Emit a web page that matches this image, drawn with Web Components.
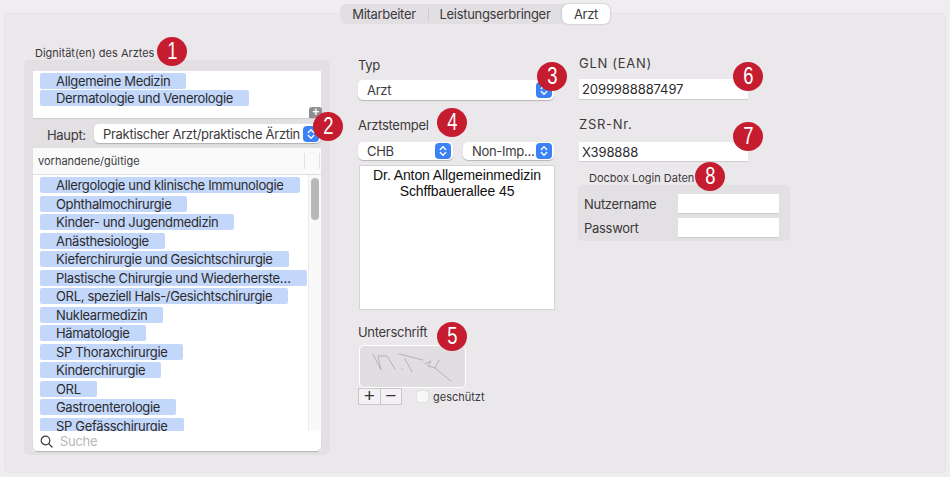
<!DOCTYPE html>
<html lang="de">
<head>
<meta charset="utf-8">
<title>Arzt</title>
<style>
  html, body { margin: 0; height: 100%; background: #f0edf0; overflow: hidden; }
  body { font: 13px Inter, "Noto Sans", sans-serif; letter-spacing: -.3px; color: #3b393b; }
</style>
</head>
<body>
<arzt-page></arzt-page>
<script>
class NumBadge extends HTMLElement {
  constructor () {
    super()
    this.shadow = this.attachShadow({ mode: 'open' })
  }
  connectedCallback () {
    this.shadow.innerHTML = `
    <style>
      :host {
        position: absolute;
        width: 30px;
        height: 29px;
        border-radius: 50%;
        background: #c61c30;
        display: flex;
        align-items: center;
        justify-content: center;
        z-index: 5;
      }
      span {
        color: #fff;
        font: 23px "Liberation Sans", sans-serif;
        letter-spacing: 0;
        transform: scaleX(.8);
      }
    </style>
    <span><slot></slot></span>`
  }
}

class SegTabs extends HTMLElement {
  constructor () {
    super()
    this.shadow = this.attachShadow({ mode: 'open' })
  }
  connectedCallback () {
    this.shadow.innerHTML = `
    <style>
      :host {
        display: flex;
        width: 270px;
        height: 20px;
        margin: 4px auto -11px;
        position: relative;
        z-index: 2;
        background: #e2dfe2;
        border-radius: 6px;
        box-sizing: border-box;
        align-items: center;
        font-size: 13px;
        color: #3b393b;
      }
      div { text-align: center; }
      .one { width: 88px; }
      .sep { width: 1px; height: 12px; background: #cfcccf; }
      .two { width: 132px; }
      .on {
        width: 48px;
        height: 20px;
        line-height: 20px;
        margin-left: 1px;
        background: #fff;
        border-radius: 6px;
        box-shadow: 0 0 2px rgba(0,0,0,.3);
      }
    </style>
    <div class="one">Mitarbeiter</div>
    <div class="sep"></div>
    <div class="two">Leistungserbringer</div>
    <div class="on">Arzt</div>`
  }
}

class PopSelect extends HTMLElement {
  constructor () {
    super()
    this.shadow = this.attachShadow({ mode: 'open' })
  }
  connectedCallback () {
    this.shadow.innerHTML = `
    <style>
      :host {
        display: flex;
        align-items: center;
        box-sizing: border-box;
        height: var(--h, 20px);
        padding: 0 2px 0 9px;
        background: #fff;
        border-radius: 5px;
        box-shadow: 0 1px 1px rgba(0,0,0,.22);
        color: #3b393b;
        font-size: 13px;
      }
      .text {
        flex: 1;
        min-width: 0;
        white-space: nowrap;
        overflow: hidden;
      }
      .step {
        width: 16px;
        height: 16px;
        border-radius: 4px;
        background: #3b82f6;
        flex: none;
      }
      svg { display: block; }
    </style>
    <div class="text"><slot></slot></div>
    <div class="step">
      <svg width="16" height="16" viewBox="0 0 16 16" fill="none" stroke="#fff" stroke-width="1.4" stroke-linecap="round" stroke-linejoin="round">
        <path d="M5.3 6.4 8 3.8l2.7 2.6M5.3 9.6 8 12.2l2.7-2.6"/>
      </svg>
    </div>`
  }
}

class TextBox extends HTMLElement {
  constructor () {
    super()
    this.shadow = this.attachShadow({ mode: 'open' })
  }
  connectedCallback () {
    this.shadow.innerHTML = `
    <style>
      :host {
        display: block;
        box-sizing: border-box;
        background: #fff;
        box-shadow: 0 1px 0 #cfccd0;
        padding: 0 3px;
        font-size: 13px;
        color: #2c2b2c;
        letter-spacing: -.1px;
      }
    </style>
    <slot></slot>`
  }
}

class ListPill extends HTMLElement {
  constructor () {
    super()
    this.shadow = this.attachShadow({ mode: 'open' })
  }
  connectedCallback () {
    this.shadow.innerHTML = `
    <style>
      :host {
        display: block;
        width: fit-content;
        height: 16px;
        line-height: 16px;
        padding: 0 16px;
        border-radius: 2px;
        background: #c3d7fa;
        color: #2c2b2c;
        font-size: 13px;
        letter-spacing: -.33px;
        white-space: nowrap;
      }
    </style>
    <slot></slot>`
  }
}

class SignatureBox extends HTMLElement {
  constructor () {
    super()
    this.shadow = this.attachShadow({ mode: 'open' })
  }
  connectedCallback () {
    this.shadow.innerHTML = `
    <style>
      :host {
        display: block;
        box-sizing: border-box;
        width: 107px;
        height: 43px;
        background: #e0dee0;
        border: 1.5px solid #fff;
        border-radius: 5px;
        overflow: hidden;
      }
      svg { display: block; margin: -1.5px; }
    </style>
    <svg width="107" height="43" viewBox="0 0 107 43" fill="none" stroke="#a9a7a9" stroke-width=".8" stroke-linejoin="round" stroke-linecap="round">
      <path d="M14 9l8 16-3-14h9l8 13"/>
      <path d="M43 24h.8"/>
      <path d="M40 9l24 6M46 14l7 13"/>
      <path d="M66 19l6-3-3 5 7 2 4-8M76 23l16 13"/>
    </svg>`
  }
}

class ArztPage extends HTMLElement {
  constructor () {
    super()
    this.shadow = this.attachShadow({ mode: 'open' })
    this.current = ['Allgemeine Medizin', 'Dermatologie und Venerologie']
    this.available = [
      'Allergologie und klinische Immunologie',
      'Ophthalmochirurgie',
      'Kinder- und Jugendmedizin',
      'Anästhesiologie',
      'Kieferchirurgie und Gesichtschirurgie',
      'Plastische Chirurgie und Wiederherste…',
      'ORL, speziell Hals-/Gesichtschirurgie',
      'Nuklearmedizin',
      'Hämatologie',
      'SP Thoraxchirurgie',
      'Kinderchirurgie',
      'ORL',
      'Gastroenterologie',
      'SP Gefässchirurgie'
    ]
    // left and top of the numbered markers, in page pixels
    this.badges = [[157, 37], [313, 112], [537, 62], [437, 108], [437, 322], [733, 62], [733, 122], [695, 162]]
  }
  connectedCallback () {
    this.render()
  }
  render () {
    const pills = (list) => list.map(item => `<list-pill>${item}</list-pill>`).join('')
    const badges = this.badges.map((b, i) => `<num-badge style="left:${b[0] - 5}px;top:${b[1] - 14}px">${i + 1}</num-badge>`).join('')
    this.shadow.innerHTML = `
    <style>
      :host { display: block; }
      .panel {
        position: relative;
        box-sizing: border-box;
        height: 460px;
        margin: 0 4px;
        padding: 33px 0 0 19px;
        background: #ebe8eb;
        border: 1px solid #e6e3e6;
        border-radius: 5px;
        display: flex;
        align-items: flex-start;
      }
      section { flex: none; }
      .small { font-size: 11px; letter-spacing: 0; }
      .group {
        box-sizing: border-box;
        background: #e3e0e3;
        border-radius: 5px;
      }
      .dign { width: 306px; margin-top: -1px; }
      .dign > .small { height: 14px; line-height: 14px; padding-left: 11px; }
      .dign .group { height: 395px; padding: 11px 9px 4px; display: flex; flex-direction: column; }
      .chosen {
        position: relative;
        height: 47px;
        background: #fff;
        box-shadow: 0 1px 0 #cfccd0;
        padding: 2px 7px;
        box-sizing: border-box;
        display: flex;
        flex-direction: column;
        gap: 1px;
      }
      .add {
        position: absolute;
        right: -1px;
        bottom: 0;
        width: 13px;
        height: 11px;
        border-radius: 3px 3px 0 0;
        background: #8f8d8f;
        color: #fff;
        font: bold 12px/11px "Liberation Sans", sans-serif;
        text-align: center;
      }
      .haupt { display: flex; align-items: center; margin-top: 6px; height: 19px; }
      .haupt label { width: 61px; padding: 2px 8px 0 14px; box-sizing: border-box; }
      .haupt pop-select { flex: 1; --h: 19px; }
      .table { margin-top: 5px; flex: 1; min-height: 0; position: relative; display: flex; flex-direction: column; }
      .head {
        height: 27px;
        flex: none;
        box-sizing: border-box;
        background: #fbfafb;
        border-bottom: 1px solid #e2dfe2;
        padding-left: 5px;
        line-height: 26px;
        font-size: 11px;
        letter-spacing: 0;
        display: flex;
      }
      .head span { flex: 1; }
      .head i { width: 14px; margin: 5px 0; border-left: 1px solid #e4e1e4; }
      .rows {
        flex: 1;
        min-height: 0;
        background: #fff;
        overflow: hidden;
        display: flex;
      }
      .pills {
        flex: 1;
        min-width: 0;
        padding: 2px 7px;
        display: flex;
        flex-direction: column;
        gap: 2.54px;
      }
      .track { width: 13px; flex: none; background: #faf9fa; border-left: 1px solid #ecebec; box-sizing: border-box; padding: 3px 2px; }
      .thumb { width: 8px; height: 42px; border-radius: 4px; background: #b9b7b9; }
      .search {
        position: absolute;
        left: 0;
        right: 0;
        bottom: 0;
        height: 20px;
        background: #fff;
        border-radius: 5px;
        box-shadow: 0 1px 1px rgba(0,0,0,.2);
        display: flex;
        align-items: center;
        gap: 7px;
        padding-left: 7px;
        color: #b9b7b9;
      }
      .search svg { display: block; flex: none; }
      .mid { width: 197px; display: flex; flex-direction: column; margin: -1px 0 0 28px; }
      .mid .lab { margin-top: 11px; height: 16px; line-height: 16px; }
      .mid .typ { margin-top: 7px; margin-right: 1px; }
      .stamp-lab { margin-top: 17px !important; }
      .pair { display: flex; gap: 10px; margin-top: 9px; margin-right: 1px; }
      .pair pop-select { --h: 18px; }
      .pair .a { width: 95px; }
      .pair .b { flex: 1; }
      .stamp {
        box-sizing: border-box;
        margin: 5px 0 0 1px;
        height: 145px;
        padding-top: 1px;
        background: #fff;
        border: 1px solid #d6d3d6;
        text-align: center;
        color: #111;
        font: 14px/16px "Liberation Sans", sans-serif;
        letter-spacing: -.1px;
      }
      .sign-lab { margin-top: 14px !important; }
      .sign { margin-top: 5px; margin-left: 1px; }
      .tools { display: flex; align-items: center; }
      .plusminus {
        display: flex;
        width: 44px;
        height: 17px;
        box-sizing: border-box;
        border: 1px solid #c9c6c9;
        background: #f3f1f3;
      }
      .plusminus div { flex: 1; text-align: center; font: 19px/14px "Liberation Sans", sans-serif; color: #333; }
      .plusminus div + div { border-left: 1px solid #c9c6c9; }
      .check { width: 11px; height: 11px; margin-left: 15px; background: #f8f7f8; border-radius: 2px; box-shadow: 0 0 1px rgba(0,0,0,.3); }
      .tools span { margin-left: 5px; font-size: 11px; letter-spacing: 0; }
      .right { width: 212px; display: flex; flex-direction: column; margin: 1px 0 0 24px; }
      .right > .lab { height: 16px; line-height: 16px; margin-top: 7px; letter-spacing: .7px; }
      .right > text-box { width: 169px; height: 20px; line-height: 20px; margin-top: 8px; }
      .right > .zsr { margin-top: 17px; }
      .right > text-box.z { height: 19px; margin-top: 10px; }
      .docbox-lab { margin: 10px 0 0 10px; height: 14px; line-height: 14px; }
      .docbox {
        margin: 0 0 0 -1px;
        width: 212px;
        height: 56px;
        padding: 9px 11px 0 6px;
        display: grid;
        grid-template-columns: 1fr 101px;
        grid-auto-rows: 19px;
        row-gap: 5px;
        align-items: center;
      }
      .docbox text-box { height: 19px; }
    </style>
    <seg-tabs></seg-tabs>
    <div class="panel">
      <section class="dign">
        <div class="small">Dignität(en) des Arztes</div>
        <div class="group">
          <div class="chosen">${pills(this.current)}<div class="add">+</div></div>
          <div class="haupt"><label>Haupt:</label><pop-select>Praktischer Arzt/praktische Ärztin</pop-select></div>
          <div class="table">
            <div class="head"><span>vorhandene/gültige</span><i></i><i style="width:1px"></i></div>
            <div class="rows">
              <div class="pills">${pills(this.available)}</div>
              <div class="track"><div class="thumb"></div></div>
            </div>
            <div class="search">
              <svg width="13" height="13" viewBox="0 0 13 13" fill="none" stroke="#3b393b" stroke-width="1.2" stroke-linecap="round"><circle cx="5.500" cy="5.500" r="4.300"/><path d="M8.700 8.700 12 12"/></svg>
              <span>Suche</span>
            </div>
          </div>
        </div>
      </section>
      <section class="mid">
        <div class="lab">Typ</div>
        <pop-select class="typ">Arzt</pop-select>
        <div class="lab stamp-lab">Arztstempel</div>
        <div class="pair"><pop-select class="a">CHB</pop-select><pop-select class="b">Non-Imp...</pop-select></div>
        <div class="stamp">Dr. Anton Allgemeinmedizin<br>Schffbauerallee 45</div>
        <div class="lab sign-lab">Unterschrift</div>
        <signature-box class="sign"></signature-box>
        <div class="tools">
          <div class="plusminus"><div>+</div><div>−</div></div>
          <div class="check"></div>
          <span>geschützt</span>
        </div>
      </section>
      <section class="right">
        <div class="lab">GLN (EAN)</div>
        <text-box>2099988887497</text-box>
        <div class="lab zsr">ZSR-Nr.</div>
        <text-box class="z">X398888</text-box>
        <div class="small docbox-lab">Docbox Login Daten</div>
        <div class="group docbox">
          <div>Nutzername</div><text-box></text-box>
          <div>Passwort</div><text-box></text-box>
        </div>
      </section>
      ${badges}
    </div>`
  }
}

customElements.define('num-badge', NumBadge)
customElements.define('seg-tabs', SegTabs)
customElements.define('pop-select', PopSelect)
customElements.define('text-box', TextBox)
customElements.define('list-pill', ListPill)
customElements.define('signature-box', SignatureBox)
customElements.define('arzt-page', ArztPage)
</script>
</body>
</html>
